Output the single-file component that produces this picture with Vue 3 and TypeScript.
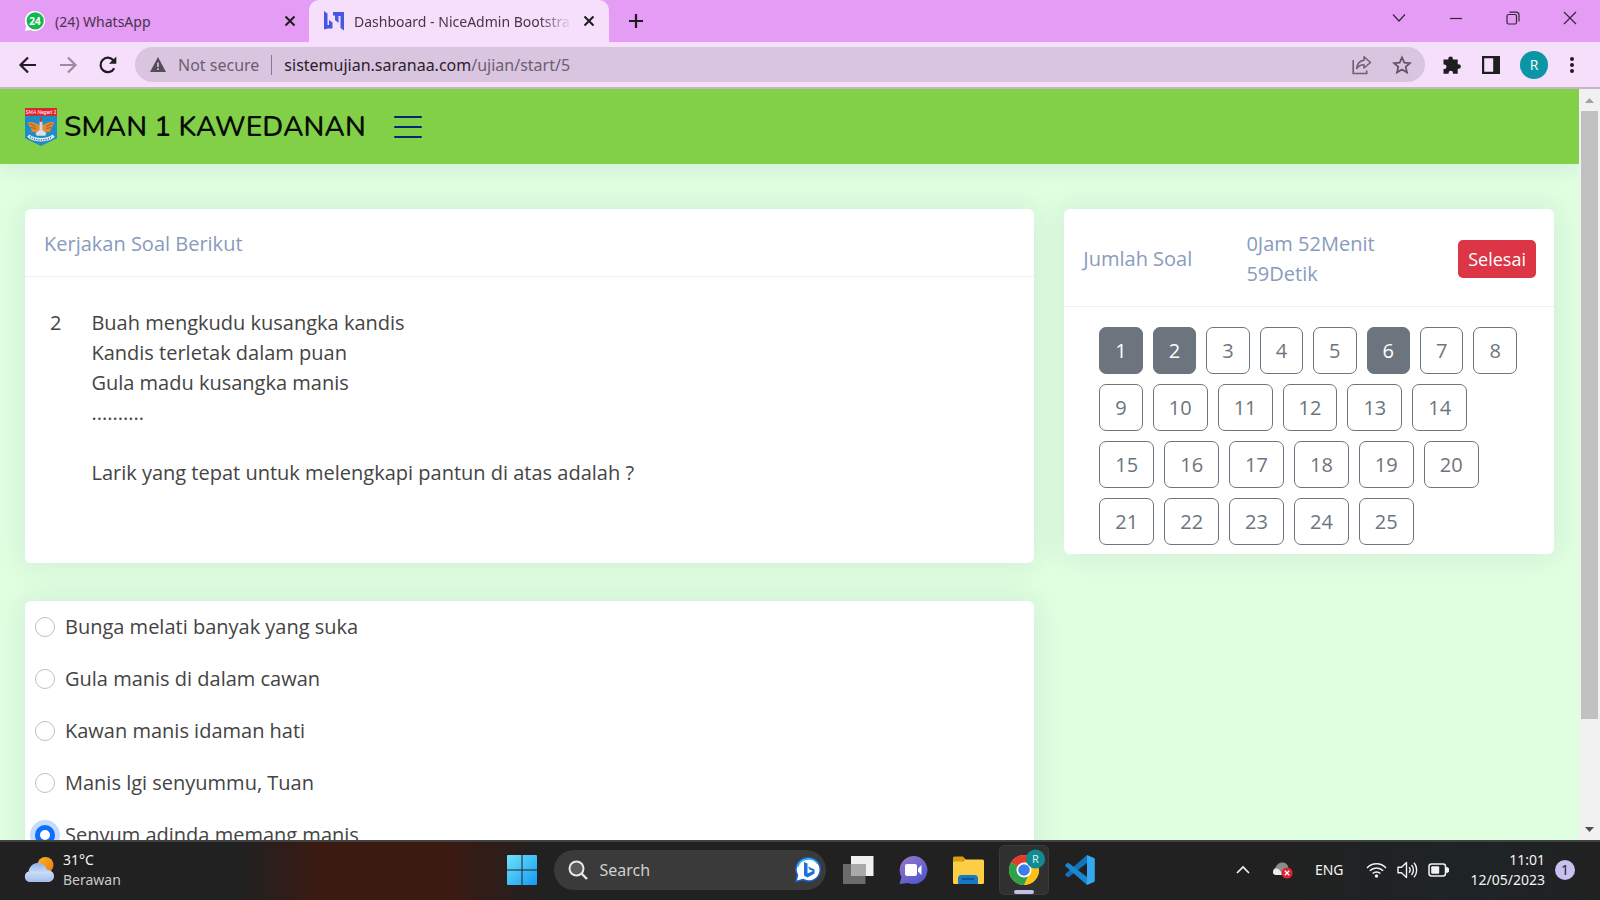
<script setup lang="ts">
import { ref } from 'vue'

const questions = Array.from({ length: 25 }, (_, i) => i + 1)
const answered = new Set<number>([1, 2, 6])

const verse: string[] = [
  'Buah mengkudu kusangka kandis',
  'Kandis terletak dalam puan',
  'Gula madu kusangka manis',
  '..........',
]

const options: string[] = [
  'Bunga melati banyak yang suka',
  'Gula manis di dalam cawan',
  'Kawan manis idaman hati',
  'Manis lgi senyummu, Tuan',
  'Senyum adinda memang manis',
]
const chosen = ref(4)
const query = ref('')
</script>

<template>
  <div class="screen">
    <div class="tabstrip">
      <div class="tab">
        <svg class="favicon" viewBox="0 0 20 20" aria-hidden="true">
          <path d="M10 0a10 10 0 1 1-4.600 18.900L0 20l1.200-5A10 10 0 0 1 10 0z" fill="#fff" />
          <circle cx="10.200" cy="9.900" r="8.600" fill="#12b84c" />
          <text x="10" y="13.500" text-anchor="middle" font-size="10" font-weight="700" fill="#fff">24</text>
        </svg>
        <span class="tab-title">(24) WhatsApp</span>
        <button class="tab-close" aria-label="Close tab">
          <svg width="12" height="12" viewBox="0 0 12 12"><path d="M1.500 1.500l9 9M10.500 1.500l-9 9" stroke="#1d1b20" stroke-width="2" /></svg>
        </button>
      </div>
      <div class="tab active">
        <svg class="favicon" viewBox="0 0 20 20" aria-hidden="true">
          <path d="M0 0l3.500 2.500v11.500H5V9l3.500 2.500V17.500H4L0 18.500zM20 19.500L16.500 17V5H14.500v7L11 9V4.500H9V1h11z" fill="#4657e0" />
        </svg>
        <span class="tab-title fade">Dashboard - NiceAdmin Bootstra</span>
        <button class="tab-close" aria-label="Close tab">
          <svg width="12" height="12" viewBox="0 0 12 12"><path d="M1.500 1.500l9 9M10.500 1.500l-9 9" stroke="#1d1b20" stroke-width="2" /></svg>
        </button>
      </div>
      <button class="new-tab" aria-label="New tab">
        <svg width="16" height="16" viewBox="0 0 16 16"><path d="M8 1v14M1 8h14" stroke="#1d1b20" stroke-width="2.200" /></svg>
      </button>
      <div class="window-controls">
        <button aria-label="Search tabs">
          <svg width="14" height="14" viewBox="0 0 14 14"><path d="M1 3.500l6 6.500 6-6.500" /></svg>
        </button>
        <button aria-label="Minimize">
          <svg width="14" height="14" viewBox="0 0 14 14"><path d="M1 7.500h12" /></svg>
        </button>
        <button aria-label="Restore">
          <svg width="14" height="14" viewBox="0 0 14 14"><rect x="1" y="3.500" width="9.500" height="9.500" rx="1.500" /><path d="M3.500 1.200H10a3 3 0 0 1 3 3V10.500" /></svg>
        </button>
        <button aria-label="Close window">
          <svg width="14" height="14" viewBox="0 0 14 14"><path d="M1 1l12 12M13 1L1 13" /></svg>
        </button>
      </div>
    </div>

    <div class="toolbar">
      <div class="nav-buttons">
        <button aria-label="Back">
          <svg width="20" height="20" viewBox="0 0 20 20"><path d="M18 10H3M10 2.500L2.500 10l7.500 7.500" fill="none" stroke="#1f1c22" stroke-width="2.200" /></svg>
        </button>
        <button aria-label="Forward">
          <svg width="20" height="20" viewBox="0 0 20 20"><path d="M2 10h15M10 2.500l7.500 7.500-7.500 7.500" fill="none" stroke="#9c8ca1" stroke-width="2.200" /></svg>
        </button>
        <button aria-label="Reload">
          <svg width="20" height="20" viewBox="0 0 20 20"><path d="M16.200 13.200A7.200 7.200 0 1 1 15.500 5.500" fill="none" stroke="#1f1c22" stroke-width="2.200" /><path d="M18.300 1.500v7.300H11z" fill="#1f1c22" /></svg>
        </button>
      </div>
      <div class="omnibox">
        <svg width="16" height="15" viewBox="0 0 16 15"><path d="M8 0l8 15H0z" fill="#554d59" /><path d="M8 5.500v4.500M8 11.200v1.800" stroke="#d9c5df" stroke-width="1.600" /></svg>
        <span class="secure">Not secure</span>
        <span class="divider"></span>
        <span class="url">sistemujian.saranaa.com<span class="path">/ujian/start/5</span></span>
        <button aria-label="Share">
          <svg width="20" height="20" viewBox="0 0 20 20"><path d="M1.200 5v13.500h13.500V15.500" fill="none" stroke="#6b6170" stroke-width="1.600" /><path d="M12 1.800l6.500 5.700-6.500 5.500V9.800c-3 0-5.500 1-7.300 3.700C5.200 9 8 5.600 12 5.200z" fill="none" stroke="#6b6170" stroke-width="1.500" stroke-linejoin="round" /></svg>
        </button>
        <button aria-label="Bookmark this page">
          <svg width="20" height="20" viewBox="0 0 20 20"><path d="M10 2.300l2.300 5.300 5.700.5-4.300 3.800 1.300 5.600-5-3-5 3 1.300-5.600L2 8.100l5.700-.5z" fill="none" stroke="#5e5463" stroke-width="1.700" /></svg>
        </button>
      </div>
      <div class="tools">
        <button aria-label="Extensions">
          <svg width="20" height="20" viewBox="0 0 20 20"><path d="M1.500 4.500h4.800V3.800a2.300 2.300 0 0 1 4.600 0v.7h4.800v4.700h.9a2.300 2.300 0 0 1 0 4.600h-.9v5H11v-.9a2.200 2.200 0 0 0-4.400 0v.9H1.500v-4.900h.8a2.200 2.200 0 0 0 0-4.400h-.8z" fill="#1f1c22" /></svg>
        </button>
        <button aria-label="Side panel">
          <svg width="20" height="20" viewBox="0 0 20 20"><path d="M1 1h18v18H1zM3.200 3.200v13.600h9V3.200z" fill="#1f1c22" fill-rule="evenodd" /></svg>
        </button>
        <button class="avatar" aria-label="Profile">R</button>
        <button aria-label="Menu" class="menu">
          <svg width="6" height="18" viewBox="0 0 6 18"><g fill="#1f1c22"><circle cx="3" cy="3" r="2" /><circle cx="3" cy="9" r="2" /><circle cx="3" cy="15" r="2" /></g></svg>
        </button>
      </div>
    </div>

    <div class="viewport">
      <div class="page">
        <header class="site-header">
          <a href="#" class="brand">
            <svg width="32" height="38" viewBox="0 0 33 39" aria-hidden="true">
              <path d="M0 0h33v31L16.500 39 0 31z" fill="#1d8dc9" />
              <path d="M0 0h33v8H0z" fill="#e0242c" />
              <text x="16.500" y="6" text-anchor="middle" font-size="5" font-style="italic" fill="#fff">SMA Negeri 1</text>
              <path d="M3 14.500c5-1 8 1 12 3h3c4-2 7-4 12-3-1 3-1 4-3 6l-1 4-6 1h-7l-6-1-1-4c-2-2-2-3-3-6z" fill="#e8872b" />
              <path d="M5 16l6 3M6 20l5 1M28 16l-6 3M27 20l-5 1" stroke="#7c5b3c" stroke-width=".8" />
              <path d="M15 14h3v10h-3z" fill="#c9d8e2" />
              <path d="M16.500 9c1.500 2 1.800 4 0 5.500-1.800-1.500-1.500-3.500 0-5.500z" fill="#e32a25" />
              <path d="M11 26l3-3h5l3 3-1 2.500h-9z" fill="#d5e2ea" />
              <path d="M3.500 28.500c5 5.500 21 5.500 26 0" fill="none" stroke="#e4eef4" stroke-width="3.400" />
              <path d="M5 29.500c5 4.500 18 4.500 23 0" fill="none" stroke="#31597a" stroke-width="1.300" stroke-dasharray="1.200 1.200" />
            </svg>
            <span>SMAN 1 KAWEDANAN</span>
          </a>
          <button class="burger" aria-label="Toggle sidebar">
            <svg width="28" height="24" viewBox="0 0 28 24"><path d="M1 2h26M1 12h26M1 22h26" stroke="#012970" stroke-width="2" stroke-linecap="round" /></svg>
          </button>
        </header>

        <main class="row">
          <div class="col wide">
            <section class="card question">
              <h2 class="card-head">Kerjakan Soal Berikut</h2>
              <div class="question-body">
                <span class="number">2</span>
                <div>
                  <p v-for="line in verse" :key="line">{{ line }}</p>
                  <br />
                  <p>Larik yang tepat untuk melengkapi pantun di atas adalah ?</p>
                </div>
              </div>
            </section>
            <section class="card answers">
              <label v-for="(option, i) in options" :key="option" class="option">
                <input v-model="chosen" type="radio" name="answer" :value="i" />
                <span>{{ option }}</span>
              </label>
            </section>
          </div>
          <div class="col narrow">
            <section class="card">
              <div class="card-head summary">
                <span>Jumlah Soal</span>
                <span>0Jam 52Menit 59Detik</span>
                <button class="finish">Selesai</button>
              </div>
              <div class="numbers">
                <button v-for="n in questions" :key="n" :class="{ done: answered.has(n) }">{{ n }}</button>
              </div>
            </section>
          </div>
        </main>
      </div>
      <div class="scrollbar" aria-hidden="true">
        <svg width="21" height="22" viewBox="0 0 21 22"><path d="M6 14h9l-4.500-5z" fill="#a3a3a3" /></svg>
        <div class="track"><div class="thumb"></div></div>
        <svg width="21" height="22" viewBox="0 0 21 22"><path d="M6 9h9l-4.500 5z" fill="#505050" /></svg>
      </div>
    </div>

    <footer class="taskbar">
      <div class="weather">
        <svg width="32" height="28" viewBox="0 0 32 28" aria-hidden="true">
          <defs>
            <linearGradient id="sun" x1="0" y1="0" x2="1" y2="1"><stop offset="0" stop-color="#fbb62b" /><stop offset="1" stop-color="#e8790e" /></linearGradient>
            <linearGradient id="cloud" x1="0" y1="0" x2="0" y2="1"><stop offset="0" stop-color="#8fb2ea" /><stop offset=".5" stop-color="#c9dbf8" /><stop offset="1" stop-color="#a3bdec" /></linearGradient>
          </defs>
          <circle cx="22.500" cy="9" r="8" fill="url(#sun)" />
          <path d="M6 26a5.500 5.500 0 0 1-.5-10.500C6.500 9.500 11 7 15 7c5 0 8 3 9 7 4 0 7 2.500 7 6s-2.500 6-6 6z" fill="url(#cloud)" />
        </svg>
        <div class="weather-text"><span>31°C</span><span class="dim">Berawan</span></div>
      </div>

      <div class="apps">
        <button class="start" aria-label="Start">
          <svg width="30" height="30" viewBox="0 0 30 30">
            <defs><linearGradient id="win" x1="0" y1="0" x2="1" y2="1"><stop offset="0" stop-color="#6fe3fb" /><stop offset="1" stop-color="#129bf3" /></linearGradient></defs>
            <path d="M1 0h13.500v14.500H0V1a1 1 0 0 1 1-1zM15.500 0H29a1 1 0 0 1 1 1v13.500H15.500zM0 15.500h14.500V30H1a1 1 0 0 1-1-1zM15.500 15.500H30V29a1 1 0 0 1-1 1H15.500z" fill="url(#win)" />
          </svg>
        </button>
        <div class="search">
          <svg width="20" height="20" viewBox="0 0 20 20"><circle cx="8.500" cy="8.500" r="7" fill="#5b5b5b" stroke="#e8e8e8" stroke-width="2" /><path d="M13.500 13.500l5.500 5.500" stroke="#e8e8e8" stroke-width="2.400" /></svg>
          <input v-model="query" type="text" placeholder="Search" aria-label="Search" />
          <svg width="26" height="26" viewBox="0 0 26 26" aria-hidden="true">
            <path d="M13.500 1A11.500 11.500 0 1 1 8 22.500L1 24.500l1.500-6.500A11.500 11.500 0 0 1 13.500 1z" fill="#fff" stroke="#1d62d8" stroke-width="1.500" />
            <path d="M2.500 10a11.500 11.500 0 0 1 20-3.500" fill="none" stroke="#25b9e6" stroke-width="1.500" />
            <path d="M9 5l3.500 1.500v10L18 14l-3.500-1.500L13 9.500l6.500 3v4L12.500 20.500 9 18.500z" fill="#1c6fdc" />
          </svg>
        </div>
        <button class="task-view" aria-label="Task view">
          <svg width="31" height="30" viewBox="0 0 31 30"><path d="M8 1h22.500v20H8z" fill="#f0f0f0" /><path d="M0 9h22.500v20H0z" fill="#6b6b6b" /><path d="M8 9h14.500v12H8z" fill="#a9a9a9" /></svg>
        </button>
        <button class="chat" aria-label="Chat">
          <svg width="29" height="30" viewBox="0 0 29 30">
            <defs><linearGradient id="chat" x1="0" y1="0" x2=".7" y2="1"><stop offset="0" stop-color="#9a79c9" /><stop offset="1" stop-color="#5058cf" /></linearGradient></defs>
            <path d="M14.500 1a14 14 0 1 1-5.500 26.900L.5 29l2-7A14 14 0 0 1 14.500 1z" fill="url(#chat)" />
            <rect x="6" y="9" width="12" height="12" rx="2" fill="#fff" /><path d="M19 13.500l3.500-3.500v10L19 16.500z" fill="#fff" />
          </svg>
        </button>
        <button aria-label="File Explorer">
          <svg width="31" height="30" viewBox="0 0 31 30">
            <path d="M0 3a1.500 1.500 0 0 1 1.500-1.500h8.500L13 5h-2L9 7H0z" fill="#dc9d12" />
            <path d="M0 6.500h9.500L12 4.500h17.500A1.500 1.500 0 0 1 31 6v21.500a1.500 1.500 0 0 1-1.500 1.500h-28A1.500 1.500 0 0 1 0 27.500z" fill="#fbce45" />
            <path d="M5 29v-5.500a3.500 3.500 0 0 1 3.500-3.500h13a3.500 3.500 0 0 1 3.500 3.500V29z" fill="#1579c6" /><path d="M9.500 24h11" stroke="#0a4c87" stroke-width="1.500" stroke-linecap="round" />
          </svg>
        </button>
        <button class="running" aria-label="Google Chrome">
          <svg width="50" height="50" viewBox="0 0 50 50">
            <circle cx="25" cy="25" r="15" fill="#fbc116" />
            <path d="M25 25L12 17.500a15 15 0 0 1 26 0z" fill="#e33b2e" />
            <path d="M25 25L12 17.500A15 15 0 0 0 25 40l6.500-11.200z" fill="#2da14c" />
            <path d="M25 25h6.500L25 40a15 15 0 0 0 13-22.500H25z" fill="#fbc116" />
            <circle cx="25" cy="25" r="7.500" fill="#fff" /><circle cx="25" cy="25" r="5.800" fill="#3b7ded" />
            <circle cx="36.500" cy="14" r="9.500" fill="#0f8c93" />
            <text x="36.500" y="18" text-anchor="middle" font-size="11" fill="#d9eff0">R</text>
            <rect x="15" y="45" width="20" height="4" rx="2" fill="#c5bfea" />
          </svg>
        </button>
        <button aria-label="Visual Studio Code">
          <svg width="31" height="30" viewBox="0 0 31 30">
            <path d="M23 0L1.500 18.800a1 1 0 0 0 0 1.500l2 1.700a1 1 0 0 0 1.200 0L23 8z" fill="#1273b8" />
            <path d="M23 30L1.500 11.200a1 1 0 0 1 0-1.500L3.500 8a1 1 0 0 1 1.200 0L23 22z" fill="#1988d0" />
            <path d="M23 0l7 3a1.500 1.500 0 0 1 .8 1.400v21.200A1.500 1.500 0 0 1 30 27l-7 3z" fill="#35a9ef" />
          </svg>
        </button>
      </div>

      <div class="tray">
        <button aria-label="Show hidden icons">
          <svg width="14" height="10" viewBox="0 0 14 10"><path d="M1 8l6-6 6 6" fill="none" stroke="#f2f2f2" stroke-width="1.700" /></svg>
        </button>
        <svg class="drive" width="21" height="18" viewBox="0 0 21 18" aria-hidden="true">
          <path d="M4 14A4 4 0 0 1 3.500 6.500C5 3 7.500 1.500 10 1.500c3.500 0 6 2 6.500 5.500a4 4 0 0 1 2 7z" fill="#8c8c8c" /><path d="M1 12c-.5-4 3.500-5.500 6-3.500l5 5.500H4c-1.500 0-2.700-.7-3-2z" fill="#ececec" />
          <circle cx="15" cy="12" r="5.600" fill="#da2634" /><path d="M12.800 9.800l4.400 4.400M17.200 9.800l-4.400 4.400" stroke="#fff" stroke-width="1.300" />
        </svg>
        <span class="lang">ENG</span>
        <svg width="21" height="18" viewBox="0 0 21 18" aria-hidden="true"><g fill="none" stroke="#f2f2f2" stroke-width="1.500"><path d="M1 7a13 13 0 0 1 19 0M3.800 9.800a9.400 9.400 0 0 1 13.400 0M6.600 12.500a5.600 5.600 0 0 1 7.800 0" /></g><circle cx="10.500" cy="15" r="1.700" fill="#f2f2f2" /></svg>
        <svg width="21" height="18" viewBox="0 0 21 18" aria-hidden="true"><g fill="none" stroke="#f2f2f2" stroke-width="1.400" stroke-linejoin="round"><path d="M1 6.200h3.500L9.500 1.500v15L4.500 11.800H1zM12 6.300a4 4 0 0 1 0 5.400M14.500 4a7.500 7.500 0 0 1 0 10M17 1.800a11 11 0 0 1 0 14.400" /></g></svg>
        <svg width="21" height="16" viewBox="0 0 21 16" aria-hidden="true"><rect x="1" y="2" width="16.500" height="12" rx="2.500" fill="none" stroke="#f2f2f2" stroke-width="1.500" /><rect x="3.200" y="4.200" width="8" height="7.600" rx="1" fill="#f2f2f2" /><path d="M18.500 5.500a2.500 2.500 0 0 1 0 5z" fill="#f2f2f2" stroke="#f2f2f2" /></svg>
        <div class="clock"><span>11:01</span><span>12/05/2023</span></div>
        <span class="badge">1</span>
      </div>
    </footer>
  </div>
</template>

<style>
html,
body {
  margin: 0;
  overflow: hidden;
}
</style>

<style scoped>
.screen {
  display: flex;
  flex-direction: column;
  height: 100vh;
  overflow: hidden;
  font-family: 'Open Sans', 'Noto Sans', sans-serif;
  color: #444;
}
* {
  box-sizing: border-box;
}
svg {
  display: block;
  flex: none;
}
button {
  display: flex;
  align-items: center;
  justify-content: center;
  flex: none;
  padding: 0;
  border: 0;
  background: none;
  font: inherit;
  color: inherit;
}
p,
h2 {
  margin: 0;
  font: inherit;
}

/* browser chrome */
.tabstrip {
  display: flex;
  flex: none;
  height: 42px;
  background: #e59cf4;
  font-family: 'Noto Sans', 'Open Sans', sans-serif;
  font-size: 14px;
  color: #45354a;
}
.tab {
  display: flex;
  align-items: center;
  gap: 10px;
  width: 309px;
  padding: 0 12px 0 25px;
}
.tab.active {
  width: 300px;
  padding: 0 13px 0 15px;
  border-radius: 10px 10px 0 0;
  background: #f6dffb;
}
.favicon {
  width: 20px;
  height: 20px;
}
.tab-title {
  flex: 1;
  min-width: 0;
  overflow: hidden;
  white-space: nowrap;
}
.fade {
  mask-image: linear-gradient(to right, #000 85%, transparent);
}
.tab-close {
  width: 14px;
  height: 20px;
}
.new-tab {
  width: 54px;
}
.window-controls {
  display: flex;
  margin: 0 2px 0 auto;
}
.window-controls button {
  width: 57px;
  height: 36px;
}
.window-controls path,
.window-controls rect {
  fill: none;
  stroke: #35253b;
  stroke-width: 1.2;
}
.toolbar {
  display: flex;
  align-items: center;
  flex: none;
  height: 47px;
  padding: 0 23px 0 18px;
  border-bottom: 2px solid #c5b5c8;
  background: #f6dffb;
}
.nav-buttons {
  display: flex;
  gap: 20px;
  margin-right: 17px;
}
.omnibox {
  display: flex;
  align-items: center;
  flex: 1;
  height: 35px;
  padding: 0 13px 0 15px;
  border-radius: 18px;
  background: #d9c5df;
  font-family: 'Noto Sans', 'Open Sans', sans-serif;
  font-size: 16px;
}
.omnibox button {
  margin-left: 20px;
}
.secure {
  margin-left: 12px;
  color: #6b6071;
}
.divider {
  width: 1px;
  height: 20px;
  margin: 0 12px;
  background: #85798a;
}
.url {
  flex: 1;
  color: #29222d;
}
.path {
  color: #6b6071;
}
.tools {
  display: flex;
  align-items: center;
  gap: 19px;
  margin-left: 17px;
}
.avatar {
  width: 28px;
  height: 28px;
  border-radius: 50%;
  background: #0a96a5;
  color: #fff;
  font-size: 14px;
}
.menu {
  width: 10px;
}

/* page */
.viewport {
  display: flex;
  flex: 1;
  min-height: 0;
}
.page {
  flex: 1;
  min-width: 0;
  overflow: hidden;
  background: #e0ffe0;
}
.scrollbar {
  display: flex;
  flex-direction: column;
  flex: none;
  width: 21px;
  background: #f1f1f1;
}
.track {
  flex: 1;
  padding: 0 2px;
}
.thumb {
  height: 86%;
  background: #c1c1c1;
}
.site-header {
  display: flex;
  align-items: center;
  height: 75px;
  padding: 0 25px;
  background: #82cf48;
  box-shadow: 0 2px 20px rgba(1, 41, 112, 0.1);
}
.brand {
  display: flex;
  align-items: center;
  gap: 7px;
  color: #060c06;
  font-family: Nunito, Lato, 'Open Sans', sans-serif;
  font-size: 28px;
  font-weight: 600;
  text-decoration: none;
}
.burger {
  margin-left: 28px;
}
.row {
  display: flex;
  align-items: flex-start;
  padding: 45px 10px 0;
}
.col {
  padding: 0 15px;
}
.wide {
  width: 66.6667%;
}
.narrow {
  width: 33.3333%;
}
.card {
  margin-bottom: 38px;
  border-radius: 6px;
  background: #fff;
  box-shadow: 0 0 30px rgba(1, 41, 112, 0.1);
  font-size: 20px;
  line-height: 30px;
}
.card-head {
  padding: 20px 18px 17px 19px;
  border-bottom: 1px solid #ebeef4;
  color: #899bbd;
}
.question-body {
  display: flex;
  gap: 30px;
  padding: 31px 25px 75px;
}
.answers {
  display: flex;
  flex-direction: column;
  gap: 22px;
  padding: 11px 10px 40px;
}
.option {
  display: flex;
  align-items: center;
  gap: 10px;
}
.option input {
  appearance: none;
  width: 20px;
  height: 20px;
  margin: 0;
  border: 1px solid #bfbfbf;
  border-radius: 50%;
  background: #fff;
}
.option input:checked {
  border: 5px solid #0d6efd;
  box-shadow: 0 0 0 5px #c2dbfe;
}
.summary {
  display: grid;
  grid-template-columns: 3fr 4fr auto;
  align-items: center;
  gap: 17px;
}
.finish {
  height: 38px;
  padding: 0 10px;
  border-radius: 5px;
  background: #dc3545;
  color: #fff;
  font-size: 18px;
}
.numbers {
  display: flex;
  flex-wrap: wrap;
  gap: 10px;
  padding: 20px 35px 9px;
}
.numbers button {
  height: 47px;
  padding: 0 15px;
  border: 1px solid #6c757d;
  border-radius: 7px;
  color: #6c757d;
}
.numbers .done {
  background: #6c757d;
  color: #fff;
}

/* taskbar */
.taskbar {
  display: grid;
  grid-template-columns: 1fr auto 1fr;
  align-items: center;
  flex: none;
  height: 60px;
  padding: 0 25px 2px 23px;
  border-top: 2px solid #414141;
  background: linear-gradient(90deg, #212121 15%, #3b1a12 20%, #3b1a12 28%, #212121 34%, #212121 80%, #1e2426 92%, #212121);
  color: #f4f4f4;
  font-family: 'Noto Sans', 'Open Sans', sans-serif;
  font-size: 14px;
  line-height: 20px;
}
.weather {
  display: flex;
  align-items: center;
  gap: 8px;
}
.weather-text,
.clock {
  display: flex;
  flex-direction: column;
}
.dim {
  color: #c9c9c9;
}
.apps {
  display: flex;
  align-items: center;
  padding-left: 3px;
}
.search {
  display: flex;
  align-items: center;
  gap: 12px;
  width: 272px;
  height: 40px;
  margin: 0 17px;
  padding: 0 5px 0 14px;
  border-radius: 20px;
  background: #3a3a3a;
}
.search input {
  flex: 1;
  min-width: 0;
  padding: 0;
  border: 0;
  outline: 0;
  background: none;
  color: #fff;
  font: inherit;
  font-size: 16px;
}
.search input::placeholder {
  color: #cfcfcf;
}
.chat {
  margin: 0 25px;
}
.running {
  margin: 0 15px;
  border-radius: 6px;
  background: #303030;
  box-shadow: inset 0 0 0 1px #3b3b3b;
}
.tray {
  display: flex;
  align-items: center;
  justify-content: flex-end;
  gap: 10px;
}
.drive {
  margin-left: 12px;
}
.lang {
  margin: 0 12px;
}
.clock {
  align-items: flex-end;
  margin-left: 12px;
}
.badge {
  width: 20px;
  height: 20px;
  border-radius: 50%;
  background: #c8c0ee;
  color: #26222e;
  text-align: center;
}
</style>
